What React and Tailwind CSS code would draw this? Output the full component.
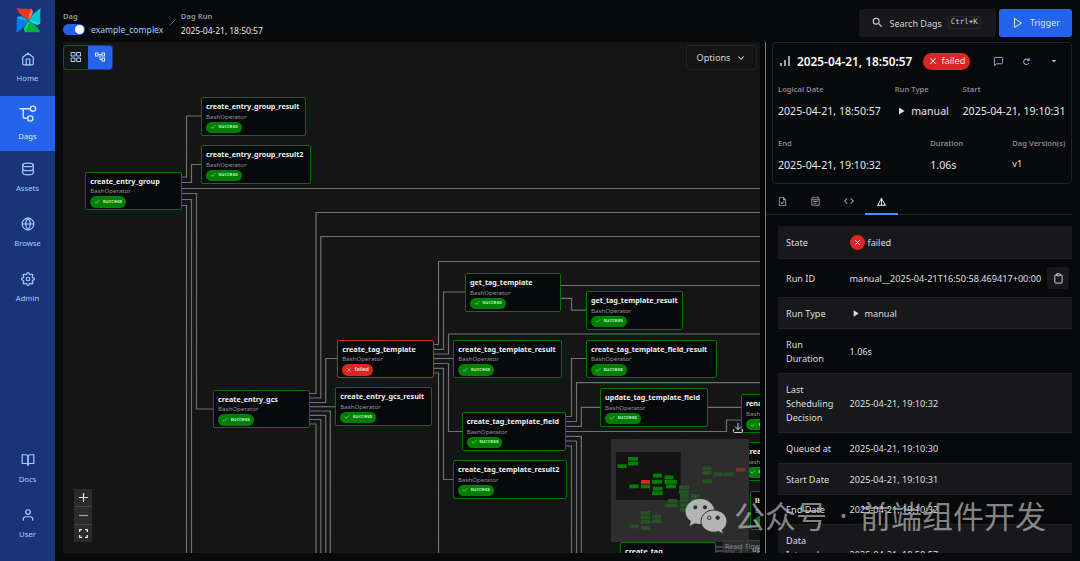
import React from 'react';
import {
    FiHome, FiDatabase, FiGlobe, FiSettings, FiBookOpen, FiUser, FiGrid, FiChevronDown,
    FiPlay, FiMessageSquare, FiClipboard, FiX, FiCheck,
} from 'react-icons/fi';
import { MdSearch, MdOutlineAccountTree, MdOutlineTask, MdOutlineEventNote, MdCode, MdDetails, MdPlayArrow, MdArrowDropDown } from 'react-icons/md';
import { CgRedo } from 'react-icons/cg';
import { LuDownload } from 'react-icons/lu';

// node positions in canvas coordinates
const nodes = [
    { label: 'create_entry_group', x: 22.3, y: 129.7, w: 96.5 },
    { label: 'create_entry_group_result', x: 138, y: 55, w: 105 },
    { label: 'create_entry_group_result2', x: 138, y: 103, w: 110 },
    { label: 'get_tag_template', x: 402, y: 231, w: 96 },
    { label: 'get_tag_template_result', x: 523, y: 249, w: 97 },
    { label: 'create_tag_template', x: 274.3, y: 297.5, w: 96.5, failed: true },
    { label: 'create_tag_template_result', x: 390.3, y: 297.5, w: 108.5 },
    { label: 'create_tag_template_field_result', x: 523, y: 297.5, w: 130.7 },
    { label: 'create_entry_gcs', x: 150, y: 347.7, w: 96.7 },
    { label: 'create_entry_gcs_result', x: 272.3, y: 345.2, w: 96.5 },
    { label: 'update_tag_template_field', x: 537, y: 346, w: 108 },
    { label: 'create_tag_template_field', x: 398.7, y: 370.2, w: 104.3 },
    { label: 'create_tag_template_result2', x: 390, y: 418.2, w: 114 },
    { label: 'rename_tag_template_field', x: 678, y: 352.3, w: 110 },
    { label: 'create_tag', x: 678, y: 400.2, w: 96 },
    { label: 'list_tags', x: 687, y: 449, w: 96 },
    { label: 'update_tag', x: 684, y: 497.5, w: 96 },
    { label: 'create_tag', x: 557, y: 500, w: 96 },
];

const edges = [
    'M118 135H123.5V74H138',
    'M118 140.5H128.5V122.5H138',
    'M118 146.5H697',
    'M118 151.5H133.5V367H150',
    'M118 157.5H128.5V511',
    'M118 163.5H123.5V511',
    'M246 351.5H253V170.5H697',
    'M246 356H257.8V194.5H697',
    'M246 360.5H262.7V316.5H274',
    'M246 364.7H272',
    'M246 369H267.3V511',
    'M246 373.3H262.7V511',
    'M246 377.5H257.8V511',
    'M246 382H253V511',
    'M370 302.5H375.5V219.5H697',
    'M370 307.3H380.5V250H402',
    'M370 312H385.5V292H697',
    'M370 316.5H390',
    'M370 321.5H385.5V389.5H399',
    'M370 326.3H380.5V437.5H390',
    'M370 331H375.5V511',
    'M498 243.5H697',
    'M498 256.3H508.5V268.2H523',
    'M503 374.5H508.5V316.5H523',
    'M503 379.5H513.5V340.7H697',
    'M503 384.3H518.3V365.3H537',
    'M503 389.5H663.5V378H678',
    'M503 394.3H518.3V511',
    'M503 399H513.5V511',
    'M503 404H508.5V511',
    'M645 365.3H678',
    'M653 505H678V511',
    'M653 509H670V511',
];

// x, y, width, state
const mapNodes = [
    [17, 18, 10, 1], [17, 22.7, 10, 1], [6.5, 25.3, 9, 1],
    [42, 34.7, 9, 1], [53.5, 36.5, 9, 1], [30, 41, 9, 2], [41, 41, 10, 1], [53.5, 41, 12.5, 1],
    [18.5, 45.5, 9, 1], [30, 45.5, 9, 1], [55, 45.5, 10, 1], [42, 47.8, 9.5, 1], [41, 52.3, 10.7, 1],
    [91.5, 27.5, 9, 0], [91.5, 32, 9, 0], [103, 33.3, 9, 0], [113, 33.3, 9, 0], [91.5, 40.3, 9.5, 0], [125, 28.7, 9, 3],
    [68, 46.5, 10, 0], [68, 51, 9.5, 0], [69, 55, 9, 0], [80, 55, 9, 0], [69, 59.3, 9, 0], [79, 59.3, 9, 0],
    [57, 60, 9, 0], [53.5, 64.5, 12.5, 0], [69, 64.2, 9, 0], [69, 69, 9, 0], [80, 63.8, 9, 0],
    [30, 72, 9, 0], [30, 76.5, 9, 0], [41, 75.7, 9, 0], [30, 81, 9, 0], [41, 80.3, 9, 0], [18.5, 85.5, 9, 0], [30, 87, 9, 0],
];
const mapColors = ['#245324', '#008000', '#dc2626', '#7a2e2e'];

const blades = [
    { angle: 0, base: '#e43921', tip: '#ff7557' },
    { angle: 90, base: '#00c7d4', tip: '#11e1ee' },
    { angle: 180, base: '#00ad46', tip: '#04d659' },
    { angle: 270, base: '#017cee', tip: '#0cb6ff' },
];

const AirflowLogo = () => (
    <svg viewBox="0 0 25 25" className="w-[25px] h-[25px] ml-px shrink-0">
        {blades.map(({ angle, base, tip }) => (
            <g key={base} transform={`rotate(${angle} 12.5 12.5)`}>
                <path d="M0.300 0.300C5 1.300 10 0.300 15.500 0.800C17.500 3.500 15.500 7 12.500 12.500C10.500 10.500 4.500 8.500 0.300 0.300Z" fill={base} />
                <path d="M15.500 0.800C18.500 4 16 7 12.500 12.500C12 8.500 13.500 5 15.500 0.800Z" fill={tip} />
            </g>
        ))}
        <circle cx="12.500" cy="12.500" r="0.800" fill="#51504f" />
    </svg>
);

const DagIcon = () => (
    <svg viewBox="0 0 18 18" className="w-[18px] h-[18px]" fill="none" stroke="currentColor" strokeWidth="1.400">
        <path d="M0.500 3.700H11M4.200 3.700V11.500a1.800 1.800 0 0 0 1.800 1.800H8.500" />
        <circle cx="14" cy="3.700" r="2.600" />
        <circle cx="11.300" cy="13.500" r="2.600" />
    </svg>
);

const SignalIcon = () => (
    <svg viewBox="0 0 12 12" className="w-[12px] h-[12px]" fill="none" stroke="#e4e4e7" strokeWidth="1.400">
        <path d="M2 11V8M6 11V5M10 11V1" />
    </svg>
);

const NavItem = ({ icon, label, active }) => (
    <a className={`flex flex-col items-center w-full h-[55px] ${active ? 'bg-[#2563eb] text-[#dbeafe]' : 'text-[#a3cfff]'}`}>
        <span className="flex items-center justify-center h-5 mt-2">{icon}</span>
        <span className={`text-[7.7px] leading-[10px] ${active ? 'mt-[7px]' : 'mt-[4px]'}`}>{label}</span>
    </a>
);

const TaskNode = ({ node }) => (
    <div
        className={`absolute h-[38.5px] rounded-[2px] border bg-[#08090b] pl-[4px] pt-[2px] overflow-hidden whitespace-nowrap ${node.failed ? 'border-[#c92424]' : 'border-[#007400]'}`}
        style={{ left: node.x, top: node.y, width: node.w }}
    >
        <p className="text-[7.2px] leading-[12px] font-bold text-[#f0f0f0]">{node.label}</p>
        <p className="text-[6.15px] leading-[10px] -mt-[0.5px] text-[#8f8f96]">BashOperator</p>
        <span className={`flex items-center w-fit h-[11.5px] rounded-full px-[4px] gap-[2.5px] text-[5.3px] font-medium text-[#dcfce7] ${node.failed ? 'bg-[#dc2626]' : 'bg-[#008000]'}`}>
            {node.failed ? <FiX className="w-[6px] h-[6px]" /> : <FiCheck className="w-[6px] h-[6px]" />}
            {node.failed ? 'failed' : 'success'}
        </span>
    </div>
);

const MiniMap = () => (
    <div className="absolute left-[548px] top-[397px] w-[138px] h-[103px]">
        <svg viewBox="0 0 138 103" className="w-full h-full">
            <rect width="138" height="103" fill="#2d2d2d" />
            <rect x="4.700" y="13" width="65" height="48" fill="#131313" />
            {mapNodes.map(([x, y, w, state], i) => (
                <rect key={i} x={x} y={y} width={w} height="3.800" fill={mapColors[state]} />
            ))}
        </svg>
    </div>
);

const Graph = () => (
    <div className="relative w-[697px] h-[511px] shrink-0 overflow-hidden bg-[#151515]">
        <svg viewBox="0 0 697 511" className="absolute inset-0 w-full h-full">
            <defs>
                <pattern id="dots" x="-2.700" y="0.900" width="9.600" height="9.600" patternUnits="userSpaceOnUse">
                    <circle cx="4.800" cy="4.800" r="0.500" fill="#333333" />
                </pattern>
            </defs>
            <rect width="697" height="511" fill="url(#dots)" />
            {edges.map((d) => (
                <path key={d} d={d} fill="none" stroke="#707070" strokeWidth="1.200" />
            ))}
        </svg>
        {nodes.map((node, i) => (
            <TaskNode key={i} node={node} />
        ))}
        <div className="absolute left-0 top-[2.5px] flex h-[25px] w-[49.500px] rounded-[3px] overflow-hidden border border-[#1c3a86]">
            <button className="flex-1 flex items-center justify-center text-[#a3cfff]">
                <FiGrid className="w-[12px] h-[12px]" />
            </button>
            <button className="flex-1 flex items-center justify-center bg-[#2563eb] text-[#dbeafe]">
                <MdOutlineAccountTree className="w-3 h-3" />
            </button>
        </div>
        <button className="absolute left-[623px] top-[3px] flex items-center justify-center gap-[6px] w-[71px] h-[25px] pt-px rounded-[3px] bg-[#151515] border border-[#222225] text-[9.100px] text-[#d4d4d8]">
            Options
            <FiChevronDown className="w-[10px] h-[10px] -mt-px" strokeWidth={2.5} />
        </button>
        <LuDownload className="absolute left-[669px] top-[380px] w-[12px] h-[12px] text-[#d4d4d8]" />
        <MiniMap />
        <span className="absolute right-0 bottom-0 w-[37px] h-[13px] pl-[2px] bg-[#3c3c3c]/60 text-[7px] leading-[13px] text-[#85858a] overflow-hidden whitespace-nowrap">React Flow</span>
        <div className="absolute left-[11px] top-[447px] flex flex-col gap-px w-[18px] bg-[#454545] text-[#e5e5e5]">
            <button className="flex items-center justify-center h-[17px] bg-[#2b2b2b]">
                <svg viewBox="0 0 9 9" className="w-[9px] h-[9px]"><path d="M4.500 0V9M0 4.500H9" stroke="currentColor" strokeWidth="1.200" /></svg>
            </button>
            <button className="flex items-center justify-center h-[17px] bg-[#2b2b2b]">
                <svg viewBox="0 0 9 9" className="w-[9px] h-[9px]"><path d="M0 4.500H9" stroke="#a3a3a3" strokeWidth="1.200" /></svg>
            </button>
            <button className="flex items-center justify-center h-[17px] bg-[#2b2b2b]">
                <svg viewBox="0 0 9 9" className="w-[9px] h-[9px]" fill="none" stroke="currentColor" strokeWidth="1.300">
                    <path d="M0.700 3V0.700H3M6 0.700H8.300V3M8.300 6V8.300H6M3 8.300H0.700V6" />
                </svg>
            </button>
        </div>
    </div>
);

const Stat = ({ label, children }) => (
    <div>
        <p className="text-[7.600px] leading-[12px] font-semibold text-[#85858d]">{label}</p>
        <div className="flex items-center text-[10.6px] leading-[14px] h-[14px] mt-[9px] text-[#e4e4e7] whitespace-nowrap">{children}</div>
    </div>
);

const RunCard = () => (
    <div className="h-[142px] rounded-[4px] border border-[#232326] pl-[5px] pr-[5.500px] pt-[8px]">
        <div className="flex items-center h-[20px] pl-px">
            <SignalIcon />
            <h2 className="ml-[6px] pt-px text-[11.850px] font-semibold text-[#fafafa] whitespace-nowrap">2025-04-21, 18:50:57</h2>
            <span className="flex items-center justify-center gap-[3px] ml-[11px] w-[47px] h-[17px] rounded-full bg-[#dc2626] text-[9.200px] text-[#fee2e2]">
                <FiX className="w-[10px] h-[10px]" strokeWidth={2.5} />
                failed
            </span>
            <div className="flex items-center ml-auto text-[#90bdf2]">
                <FiMessageSquare className="w-[11px] h-[11px]" />
                <CgRedo className="ml-[17px] w-[11px] h-[11px]" />
                <MdArrowDropDown className="ml-[16px] mr-[6px] w-[12px] h-[12px]" />
            </div>
        </div>
        <div className="flex justify-between mt-[12px]">
            <Stat label="Logical Date">2025-04-21, 18:50:57</Stat>
            <Stat label="Run Type"><MdPlayArrow className="w-[12px] h-[12px] mr-[4.500px]" />manual</Stat>
            <Stat label="Start">2025-04-21, 19:10:31</Stat>
        </div>
        <div className="flex justify-between mt-[19px]">
            <Stat label="End">2025-04-21, 19:10:32</Stat>
            <Stat label="Duration">1.06s</Stat>
            <Stat label="Dag Version(s)"><span className="-mt-[2px] text-[9.200px]">v1</span></Stat>
        </div>
    </div>
);

const Row = ({ label, height, striped, children }) => (
    <div className={`flex items-center ${height} pl-[8.500px] pt-[2px] border-b border-[#232326] shrink-0 ${striped ? 'bg-[#18181b]' : ''}`}>
        <div className="w-[63.500px] pr-2 shrink-0">{label}</div>
        <div className="flex items-center flex-1 whitespace-nowrap">{children}</div>
    </div>
);

const DetailsPanel = () => (
    <div className="w-[315px] h-[511px] pl-[6px] pr-[8px] border-l border-[#77777c] overflow-hidden">
        <RunCard />
        <div className="flex h-[31px] -ml-[6px] border-b border-[#232326] text-[#96969e]">
            <span className="flex items-center justify-center w-[33px] pt-[4px]"><MdOutlineTask className="w-[11px] h-[11px]" /></span>
            <span className="flex items-center justify-center w-[33px] pt-[4px]"><MdOutlineEventNote className="w-[11px] h-[11px]" /></span>
            <span className="flex items-center justify-center w-[33px] pt-[4px]"><MdCode className="w-[12px] h-[12px]" /></span>
            <span className="flex items-center justify-center w-[33px] pt-[5px] -mb-px border-b-2 border-[#4593f8] text-[#fafafa]"><MdDetails className="w-[11px] h-[11px]" /></span>
        </div>
        <div className="flex flex-col mt-[11px] ml-[5.500px] text-[9.150px] leading-[14px] text-[#dedee0]">
            <Row label="State" height="h-[33px]" striped>
                <span className="flex items-center justify-center w-[15px] h-[15px] -mt-[2px] mr-[3px] rounded-full bg-[#dc2626]"><FiX className="w-[9px] h-[9px]" strokeWidth={2.5} /></span>
                <span className="-mt-px">failed</span>
            </Row>
            <Row label="Run ID" height="h-[39px]">
                manual__2025-04-21T16:50:58.469417+00:00
                <button className="flex items-center justify-center w-[22px] h-[22px] -mt-[2px] ml-auto mr-[3px] rounded-[3px] bg-[#18181b]">
                    <FiClipboard className="w-[11px] h-[11px]" />
                </button>
            </Row>
            <Row label="Run Type" height="h-[31px]" striped><MdPlayArrow className="w-[11px] h-[11px] mr-[4px] -mt-px" />manual</Row>
            <Row label="Run Duration" height="h-[45px]">1.06s</Row>
            <Row label="Last Scheduling Decision" height="h-[59px]" striped>2025-04-21, 19:10:32</Row>
            <Row label="Queued at" height="h-[30.500px]">2025-04-21, 19:10:30</Row>
            <Row label="Start Date" height="h-[31px]" striped>2025-04-21, 19:10:31</Row>
            <Row label="End Date" height="h-[30.500px]">2025-04-21, 19:10:32</Row>
            <Row label="Data Interval Start" height="h-[58.500px]" striped>2025-04-21, 18:50:57</Row>
        </div>
    </div>
);

const Header = () => (
    <header className="flex h-[42px] text-[8.600px] text-[#e4e4e7]">
        <div className="pt-[10px]">
            <p className="text-[7.500px] leading-[12px] font-semibold text-[#96969e]">Dag</p>
            <div className="flex items-center h-[16px]">
                <span className="flex items-center justify-end w-[22px] h-[11px] -mt-px pr-[1.500px] rounded-full bg-[#2563eb]">
                    <span className="w-[9px] h-[9px] rounded-full bg-white" />
                </span>
                <span className="ml-[6px] pt-px text-[#a3cfff]">example_complex</span>
            </div>
        </div>
        <svg viewBox="0 0 8 8" className="w-[7px] h-[7px] ml-[5.500px] mt-[19px]"><path d="M0.500 7.500L7.500 0.500" stroke="#6b6b70" strokeWidth="1" /></svg>
        <div className="pt-[10px] ml-[5px]">
            <p className="text-[7.500px] leading-[12px] font-semibold tracking-[0.1px] text-[#96969e]">Dag Run</p>
            <p className="leading-[18px] tracking-[-0.08px]">2025-04-21, 18:50:57</p>
        </div>
        <div className="flex gap-[3px] ml-auto mr-[8.500px] pt-[9px]">
            <button className="flex items-center w-[137.500px] h-[27.500px] pl-[12px] pt-px rounded-[3px] bg-[#18181b] text-[9px] text-[#d4d4d8]">
                <MdSearch className="w-[13px] h-[13px] mr-[6px] -mt-[2px]" />
                Search Dags
                <kbd className="ml-[6px] -mt-[2px] h-[13px] px-[2px] rounded-[2px] border border-[#27272a] font-['DejaVu_Sans_Mono',monospace] text-[7.500px] leading-[10px]">Ctrl+K</kbd>
            </button>
            <button className="flex items-center w-[72.500px] h-[27.500px] pl-[13px] pt-px rounded-[3px] bg-[#2563eb] text-[8.800px] text-[#dbeafe]">
                <FiPlay className="w-[12px] h-[12px] mr-[6px] -mt-px" />
                Trigger
            </button>
        </div>
    </header>
);

const Watermark = () => (
    <div className="absolute left-[684px] top-[494px] flex items-center h-[44px] text-[#bdbdbd]/70 whitespace-nowrap">
        <svg viewBox="0 0 44 38" className="w-[44px] h-[38px]">
            <path fillRule="evenodd" fill="#b4b4b4" d="M16 2C8 2 1.500 7.500 1.500 14.500C1.500 18.500 3.700 22 7 24.300L5.500 29L11 26.200C12.600 26.700 14.200 27 16 27C23.500 27 30.500 21.500 30.500 14.500C30.500 7.500 24 2 16 2ZM11.300 8.200a2 2 0 1 1 0 4.100a2 2 0 1 1 0-4.100ZM21 8.200a2 2 0 1 1 0 4.100a2 2 0 1 1 0-4.100Z" />
            <path fillRule="evenodd" fill="#b4b4b4" stroke="#333333" strokeWidth="1" d="M30 13C23 13 17 18 17 24.300C17 30.500 23 35.200 30 35.200C31.600 35.200 33 35 34.400 34.500L39.500 37L38.200 33C41.200 31 43 28 43 24.300C43 18 37 13 30 13ZM25.300 19a1.700 1.700 0 1 1 0 3.500a1.700 1.700 0 1 1 0-3.500ZM33.700 19a1.700 1.700 0 1 1 0 3.500a1.700 1.700 0 1 1 0-3.500Z" />
        </svg>
        <div className="flex ml-[6px] -mt-[3px] font-['Noto_Sans_CJK_SC',sans-serif] text-[31px] leading-[44px]">
            <span>公众号</span>
            <span className="w-[33px] text-center font-['Noto_Sans',sans-serif]">·</span>
            <span>前端组件开发</span>
        </div>
    </div>
);

export default function App() {
    return (
        <div className="relative flex w-[1080px] h-[561px] overflow-hidden bg-[#08090b] font-['Noto_Sans','Noto_Sans_CJK_SC',sans-serif]">
            <aside className="flex flex-col items-center w-[55px] h-full pt-[8px] pb-[9px] bg-[#193478]">
                <AirflowLogo />
                <nav className="flex flex-col w-full mt-[8px]">
                    <NavItem icon={<FiHome className="w-[14px] h-[14px]" />} label="Home" />
                    <NavItem icon={<DagIcon />} label="Dags" active />
                    <NavItem icon={<FiDatabase className="w-[14px] h-[14px]" />} label="Assets" />
                    <NavItem icon={<FiGlobe className="w-[14px] h-[14px]" />} label="Browse" />
                    <NavItem icon={<FiSettings className="w-[14px] h-[14px]" />} label="Admin" />
                </nav>
                <div className="flex flex-col w-full mt-auto">
                    <NavItem icon={<FiBookOpen className="w-[14px] h-[14px]" />} label="Docs" />
                    <NavItem icon={<FiUser className="w-[14px] h-[14px]" />} label="User" />
                </div>
            </aside>
            <main className="flex flex-col w-[1025px] pl-[8px]">
                <Header />
                <div className="flex justify-between">
                    <Graph />
                    <DetailsPanel />
                </div>
            </main>
            <Watermark />
        </div>
    );
}
